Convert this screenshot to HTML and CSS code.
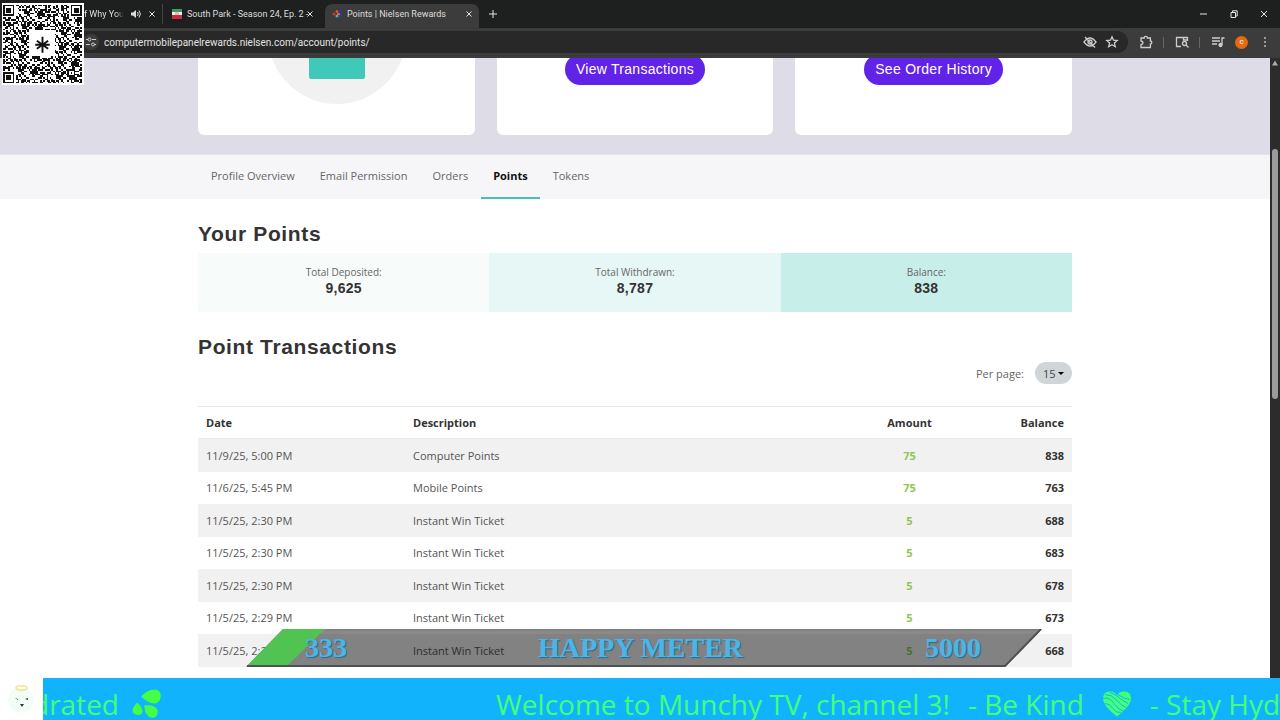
FILE: index.html
```html
<!DOCTYPE html>
<html lang="en">
<head>
<meta charset="utf-8">
<title>Points | Nielsen Rewards</title>
<link rel="stylesheet" href="styles.css">
</head>
<body>
<div class="screen">
  <header class="browser">
    <div class="tabs">
      <div class="tab tab-first">
        <span class="tab-title fade">f Why You W</span>
        <svg class="ic12" viewBox="0 0 12 12"><path d="M1 4.500h2L6 2v8L3 7.500H1z" fill="#ddd"/><path d="M7.500 4q1.500 2 0 4M9 2.500q2.800 3.500 0 7" fill="none" stroke="#ddd"/></svg>
        <button class="close" aria-label="Close tab"><svg viewBox="0 0 8 8"><path d="M1.500 1.500l5 5M6.500 1.500l-5 5"/></svg></button>
      </div>
      <div class="tab tab-second">
        <svg class="ic12" viewBox="0 0 12 12"><path d="M1 1h10v3H1z" fill="#3d9a62"/><path d="M1 4h10v4H1z" fill="#f3eeee"/><path d="M1 7h10v4H1z" fill="#cf2942"/><path d="M4 4h4v3H4z" fill="#e8bcbc"/></svg>
        <span class="tab-title">South Park - Season 24, Ep. 2 -</span>
        <button class="close" aria-label="Close tab"><svg viewBox="0 0 8 8"><path d="M1.500 1.500l5 5M6.500 1.500l-5 5"/></svg></button>
      </div>
      <div class="tab tab-active">
        <svg class="ic12" viewBox="0 0 12 12"><circle cx="3" cy="6" r="1.500" fill="#d8322e"/><circle cx="6" cy="3.500" r="1.500" fill="#e4502e"/><circle cx="6" cy="8" r="1.500" fill="#3bb8c8"/><path d="M6 5h3v2H6z" fill="#eb5f38"/><circle cx="9" cy="3.500" r="1.700" fill="#2739b5"/><circle cx="9.500" cy="7.500" r="1" fill="#3345a8"/></svg>
        <span class="tab-title">Points | Nielsen Rewards</span>
        <button class="close" aria-label="Close tab"><svg viewBox="0 0 8 8"><path d="M1.500 1.500l5 5M6.500 1.500l-5 5"/></svg></button>
      </div>
      <button class="close plus" aria-label="New tab"><svg viewBox="0 0 8 8"><path d="M4 0v8M0 4h8"/></svg></button>
      <div class="window-buttons">
        <button class="close" aria-label="Minimize"><svg viewBox="0 0 8 8"><path d="M0 4h7"/></svg></button>
        <button class="close" aria-label="Restore"><svg viewBox="0 0 8 8"><path d="M1 2.500h4.500v5H1zM2.500 2V.8h4.700V6H6"/></svg></button>
        <button class="close" aria-label="Close window"><svg viewBox="0 0 8 8"><path d="M1 1l6 6M7 1L1 7"/></svg></button>
      </div>
    </div>
    <div class="toolbar">
      <div class="address">
        <button class="site-info" aria-label="Site information"><svg viewBox="0 0 12 12"><path d="M1 3.500h2M7 3.500h4M1 8.500h4M9 8.500h2"/><circle cx="4.500" cy="3.500" r="1.500"/><circle cx="8" cy="8.500" r="1.500"/></svg></button>
        <input class="url" type="text" aria-label="Address" value="computermobilepanelrewards.nielsen.com/account/points/">
        <button class="tool" aria-label="Tracking protection"><svg viewBox="0 0 14 14"><path d="M1 7q6-8 12 0q-6 8-12 0zM2 2l10 10.500"/><circle cx="7" cy="7" r="2"/></svg></button>
        <button class="tool" aria-label="Bookmark"><svg viewBox="0 0 14 14"><path d="M7 1.800l1.500 3.400 3.700.3-2.800 2.500.9 3.700L7 9.700l-3.300 2 .9-3.700-2.800-2.500 3.700-.3z"/></svg></button>
      </div>
      <div class="tools">
        <button class="tool" aria-label="Extensions"><svg viewBox="0 0 14 14"><path d="M2 3h3.200q0-1.600 1.600-1.600T8.400 3h3v3q1.400 0 1.400 1.500T11.400 9v3.500H2V9.500q2-.2 2-1.700T2 6z"/></svg></button>
        <span class="rule"></span>
        <button class="tool" aria-label="Side search"><svg viewBox="0 0 14 14"><path d="M6 11.500H1.500v-9h11v3.500M8.500 2.500V5H12"/><circle cx="9.500" cy="8.500" r="2"/><path d="M11 10l2.500 2.500"/></svg></button>
        <span class="rule"></span>
        <button class="tool" aria-label="Media"><svg viewBox="0 0 14 14"><path d="M1 3h8M1 6h8M1 9h5M11 10V3h2.500"/><circle cx="9.500" cy="10" r="1.500" fill="#ccc"/></svg></button>
        <button class="profile" aria-label="Profile">c</button>
        <button class="tool" aria-label="Menu"><svg viewBox="0 0 14 14"><path d="M7 2v2M7 6v2M7 10v2"/></svg></button>
      </div>
    </div>
  </header>

  <div class="viewport">
    <main class="page">
      <section class="hero">
        <div class="wrap cards">
          <div class="card"><svg class="badge-art" viewBox="0 0 140 47"><circle cx="71" cy="-23" r="69" fill="#f1f1f1"/><rect x="43" y="-20" width="56" height="41" rx="2" fill="#40c8b8"/></svg></div>
          <div class="card"><button class="pill">View Transactions</button></div>
          <div class="card"><button class="pill">See Order History</button></div>
        </div>
      </section>
      <nav class="subnav">
        <div class="wrap links">
          <a href="#profile">Profile Overview</a><a href="#email">Email Permission</a><a href="#orders">Orders</a><a href="#points" class="current">Points</a><a href="#tokens">Tokens</a>
        </div>
      </nav>
      <div class="wrap content">
        <h2>Your Points</h2>
        <div class="totals">
          <div class="total deposited">Total Deposited:<strong>9,625</strong></div>
          <div class="total withdrawn">Total Withdrawn:<strong>8,787</strong></div>
          <div class="total balance">Balance:<strong>838</strong></div>
        </div>
        <h2>Point Transactions</h2>
        <div class="per-page">
          <label for="count">Per page:</label>
          <div class="select-box">
            <select id="count"><option>15</option><option>30</option></select>
            <svg viewBox="0 0 6 3"><path d="M0 0h6L3 3z"/></svg>
          </div>
        </div>
        <table>
          <colgroup><col class="c-date"><col><col class="c-amount"><col class="c-balance"></colgroup>
          <thead><tr><th>Date</th><th>Description</th><th>Amount</th><th>Balance</th></tr></thead>
          <tbody>
            <tr><td>11/9/25, 5:00 PM</td><td>Computer Points</td><td>75</td><td>838</td></tr>
            <tr><td>11/6/25, 5:45 PM</td><td>Mobile Points</td><td>75</td><td>763</td></tr>
            <tr><td>11/5/25, 2:30 PM</td><td>Instant Win Ticket</td><td>5</td><td>688</td></tr>
            <tr><td>11/5/25, 2:30 PM</td><td>Instant Win Ticket</td><td>5</td><td>683</td></tr>
            <tr><td>11/5/25, 2:30 PM</td><td>Instant Win Ticket</td><td>5</td><td>678</td></tr>
            <tr><td>11/5/25, 2:29 PM</td><td>Instant Win Ticket</td><td>5</td><td>673</td></tr>
            <tr><td>11/5/25, 2:29 PM</td><td>Instant Win Ticket</td><td>5</td><td>668</td></tr>
          </tbody>
        </table>
      </div>
    </main>
    <div class="scrollbar"><svg viewBox="0 0 10 10"><path d="M5 2.500l3 5H2z"/></svg><div class="thumb"></div></div>
  </div>

  <svg class="qr" viewBox="0 0 51 51" shape-rendering="crispEdges" role="img" aria-label="QR code">
    <rect width="51" height="51" fill="#fff"/>
    <path id="qr-modules" fill="#111"/>
    <path d="M25.500 21v10M22 23.500l7 5M29 23.500l-7 5M21 26h9" stroke="#111" stroke-width="1.200" shape-rendering="auto"/>
  </svg>

  <div class="meter">
    <svg viewBox="0 0 796 38" preserveAspectRatio="none">
      <path d="M37 0H796L759 38H0z" fill="#000" fill-opacity=".46"/>
      <path d="M37 0H79L42 36H2z" fill="#50c353"/>
      <path d="M79 1H794" stroke="#777" stroke-width="1"/>
      <path d="M1 37H759L795 0" fill="none" stroke="#505050" stroke-width="2"/>
    </svg>
    <span>333</span><span>HAPPY METER</span><span>5000</span>
  </div>

  <footer class="ticker">
    <div class="mascot"><svg viewBox="0 0 43 42"><circle cx="21" cy="22" r="13" fill="#f3fdf8"/><ellipse cx="21.500" cy="10" rx="5.500" ry="2.200" fill="none" stroke="#f6e38b" stroke-width="1.500"/><path d="M15 20l3 1v1zM28 20l-3 1 3 1zM20 26h4l-2 3z" fill="#333"/></svg></div>
    <div class="feed">
      <div class="message leaving">
        <span>drated</span>
        <svg class="drops" viewBox="0 0 30 31"><path d="M9 8Q17-1 26 1q4 2 3 8t-7 6Q17 15 9 8zM5 14q8 8 4 12-4 2-8-1-3-4 4-11zM12 17q12-1 14 5 1 7-5 8-8-1-9-13z"/></svg>
      </div>
      <div class="message">
        <span>Welcome to Munchy TV, channel 3!</span>
        <span>- Be Kind</span>
        <svg class="heart" viewBox="0 0 30 27"><path d="M15 26Q1 15 1 8 1 1 8 1q5 0 7 4 2-4 7-4 7 0 7 7 0 7-14 18z"/><path class="stripes" d="M1 8q6-2 11 5t10 8M3 4q7 0 12 6t9 7M8 2q6 2 9 5t9 6M16 4q5 4 12 5M3 13q5 0 8 5t8 4"/></svg>
        <span>- Stay Hydrated</span>
      </div>
    </div>
  </footer>
</div>
<script src="qr.js"></script>
</body>
</html>
```
FILE: styles.css
```css
* { box-sizing: border-box; }
body { margin: 0; font-family: "Open Sans", "Noto Sans", sans-serif; font-size: 11px; color: #444; background: #fff; }
button { border: 0; padding: 0; background: none; font: inherit; color: inherit; }
.screen { position: relative; height: 100vh; display: flex; flex-direction: column; overflow: hidden; }

.browser { background: #1d201f; color: #ddd; font-family: Roboto, "Noto Sans", sans-serif; }
.tabs { display: flex; align-items: stretch; height: 28px; padding-top: 4px; font-size: 9px; }
.tab { display: flex; align-items: center; gap: 4px; padding: 0 9px 0 8px; height: 20px; }
.tab-first { width: 163px; padding: 0 6px 0 84px; gap: 6px; border-right: 1px solid #444; }
.tab-second { width: 162px; padding-right: 11px; }
.tab-active { width: 154px; height: 24px; padding: 0 6px 4px; background: #3c3c3c; border-radius: 7px 7px 0 0; }
.tab-title { flex: 1; min-width: 0; white-space: nowrap; }
.fade { mask-image: linear-gradient(90deg, #000 80%, transparent); }
.ic12 { width: 12px; height: 12px; flex: none; }
.close { width: 8px; height: 20px; display: flex; align-items: center; flex: none; }
.close svg { width: 8px; height: 8px; fill: none; stroke: #e4e4e4; }
.plus { margin-left: 10px; }
.window-buttons { display: flex; gap: 22px; margin-left: auto; padding-right: 12px; }
.toolbar { display: flex; height: 30px; padding: 3px 8px 5px 80px; background: #3c3c3c; }
.address { flex: 1; display: flex; align-items: center; gap: 8px; padding: 0 9px 0 3px; background: #282828; border-radius: 0 11px 11px 0; }
.site-info { width: 16px; height: 16px; border-radius: 8px; background: #3c3c3c; display: flex; align-items: center; justify-content: center; }
.site-info svg { width: 12px; height: 12px; fill: none; stroke: #ccc; }
.url { flex: 1; min-width: 0; border: 0; padding: 0; margin-left: -3px; background: transparent; color: #e3e3e3; font: inherit; font-size: 10px; }
.tool { width: 14px; height: 14px; display: flex; flex: none; }
.tool svg { width: 14px; height: 14px; fill: none; stroke: #ccc; stroke-width: 1.3; }
.tools { display: flex; align-items: center; gap: 10px; padding-left: 11px; }
.rule { width: 1px; height: 11px; margin-right: 1px; background: #666; }
.profile { width: 13px; height: 13px; border-radius: 50%; background: #e56a13; color: #fff; font-size: 8px; line-height: 12px; text-align: center; }

.viewport { flex: 1; min-height: 0; display: flex; }
.page { flex: 1; min-width: 0; overflow: hidden; }
.wrap { max-width: 874px; margin: 0 auto; }
.hero { background: #dedde7; padding-bottom: 19px; border-bottom: 1px solid #e5e4ed; }
.cards { display: grid; grid-template-columns: repeat(3, 1fr); gap: 22px; }
.card { height: 77px; background: #fff; border-radius: 0 0 6px 6px; overflow: hidden; text-align: center; }
.badge-art { width: 140px; height: 47px; display: block; margin: 0 auto; }
.pill { height: 31px; margin-top: -4px; padding: 0 11px 1px; border-radius: 16px; background: #6223e8; color: #fff; font-family: "Liberation Sans", Arial, sans-serif; font-size: 14px; letter-spacing: .02em; }
.subnav { background: #f6f6f9; }
.links { display: flex; gap: 1px; padding-left: 1px; }
.links a { height: 44px; padding: 0 12px; line-height: 42px; color: #666; text-decoration: none; border-bottom: 2px solid transparent; }
.links .current { color: #111; font-weight: 700; border-color: #4bbfb1; }
h2 { margin: 0; font-family: "Liberation Sans", Arial, sans-serif; font-size: 21px; line-height: 24px; letter-spacing: .03em; color: #333; }
.content { padding-top: 23px; }
.totals { display: grid; grid-template-columns: repeat(3, 1fr); margin: 7px 0 23px; }
.total { height: 59px; padding-top: 12px; text-align: center; font-size: 10px; line-height: 15px; color: #666; }
.total strong { display: block; font-family: "Liberation Sans", Arial, sans-serif; font-size: 14px; line-height: 16px; letter-spacing: .02em; color: #333; }
.deposited { background: #f7fcfb; }
.withdrawn { background: #e6f7f5; }
.balance { background: #c8eeea; }
.per-page { display: flex; justify-content: flex-end; align-items: center; gap: 11px; margin: 3px 0 22px; color: #666; }
.select-box { position: relative; }
.select-box select { display: block; appearance: none; width: 37px; height: 22px; padding: 0 0 0 8px; border: 0; border-radius: 11px; background: #d0d6d8; color: #444; font: inherit; }
.select-box svg { position: absolute; right: 8px; top: 10px; width: 6px; height: 3px; pointer-events: none; }
table { width: 100%; table-layout: fixed; border-collapse: separate; border-spacing: 0; border-top: 1px solid #e6e6e6; }
.c-date { width: 207px; }
.c-amount { width: 125px; }
.c-balance { width: 100px; }
th, td { height: 33px; padding: 0 8px; text-align: left; line-height: 16px; }
th { height: 32px; color: #333; border-bottom: 1px solid #e9e9e9; }
td { color: #555; }
tbody tr:nth-child(odd) { background: #f1f1f1; }
tbody tr:nth-child(even) td { height: 32px; }
th:nth-child(3), td:nth-child(3) { text-align: center; }
th:nth-child(4), td:nth-child(4) { text-align: right; }
td:nth-child(3) { color: #8cc850; font-weight: 700; }
td:nth-child(4) { color: #333; font-weight: 700; }
.scrollbar { width: 10px; background: #2c2c2c; }
.scrollbar svg { width: 10px; height: 10px; display: block; fill: #aaa; }
.thumb { width: 6px; height: 250px; margin: 81px 2px 0; border-radius: 3px; background: #9b9b9b; }

.qr { position: absolute; left: 1px; top: 3px; width: 83px; height: 82px; }
.meter { position: absolute; left: 246px; right: 238px; bottom: 53px; height: 38px; padding: 0 61px 0 59px; display: grid; grid-template-columns: 233px auto 1fr; align-items: center; font: 700 28px/38px "Liberation Serif", "Times New Roman", serif; color: #49b6e6; text-shadow: 1px 1px 1px #276b93; }
.meter svg { position: absolute; inset: 0; width: 100%; height: 100%; }
.meter span { position: relative; }
.meter span:last-child { text-align: right; }
.ticker { position: absolute; left: 0; right: 0; bottom: 0; height: 42px; display: flex; background: #12b3fd; color: #43ff78; }
.mascot { width: 43px; background: #fff; }
.mascot svg { display: block; width: 43px; height: 42px; }
.feed { flex: 1; min-width: 0; overflow: hidden; display: flex; gap: 334px; white-space: nowrap; font-size: 28px; line-height: 52px; }
.message { display: flex; flex: none; gap: 18px; }
.leaving { width: 119px; gap: 13px; justify-content: flex-end; }
.drops, .heart { flex: none; width: 30px; height: 30px; margin-top: 11px; fill: #43ff45; }
.heart { fill: #43ff78; }
.stripes { fill: none; stroke: #12b3fd; stroke-width: 1; }
```
FILE: qr.js
```js
// Fills a 49 x 49 module symbol, one module of quiet zone around it.
(function () {
  var n = 49, seed = 20251109, d = "";
  var corners = [[0, 0], [n - 7, 0], [0, n - 7]];
  function random() {
    seed = (seed * 1103515245 + 12345) % 2147483648;
    return seed / 2147483648;
  }
  function ring(x, y, cx, cy, outer) {
    var r = Math.max(Math.abs(x - cx), Math.abs(y - cy));
    return r > outer + 1 ? null : r === outer || (outer === 3 ? r < 2 : r === 0);
  }
  for (var y = 0; y < n; y++) {
    for (var x = 0; x < n; x++) {
      var dark = random() < 0.56;
      if (x > 15 && x < 32 && y > 15 && y < 32) dark = false;
      if (x > 39 && x < 45 && y > 39 && y < 45) dark = ring(x, y, 42, 42, 2);
      corners.forEach(function (c) {
        var v = ring(x, y, c[0] + 3, c[1] + 3, 3);
        if (v !== null) dark = v;
      });
      if (dark) d += "M" + (x + 1) + " " + (y + 1) + "h1v1h-1z";
    }
  }
  document.getElementById("qr-modules").setAttribute("d", d);
})();
```
